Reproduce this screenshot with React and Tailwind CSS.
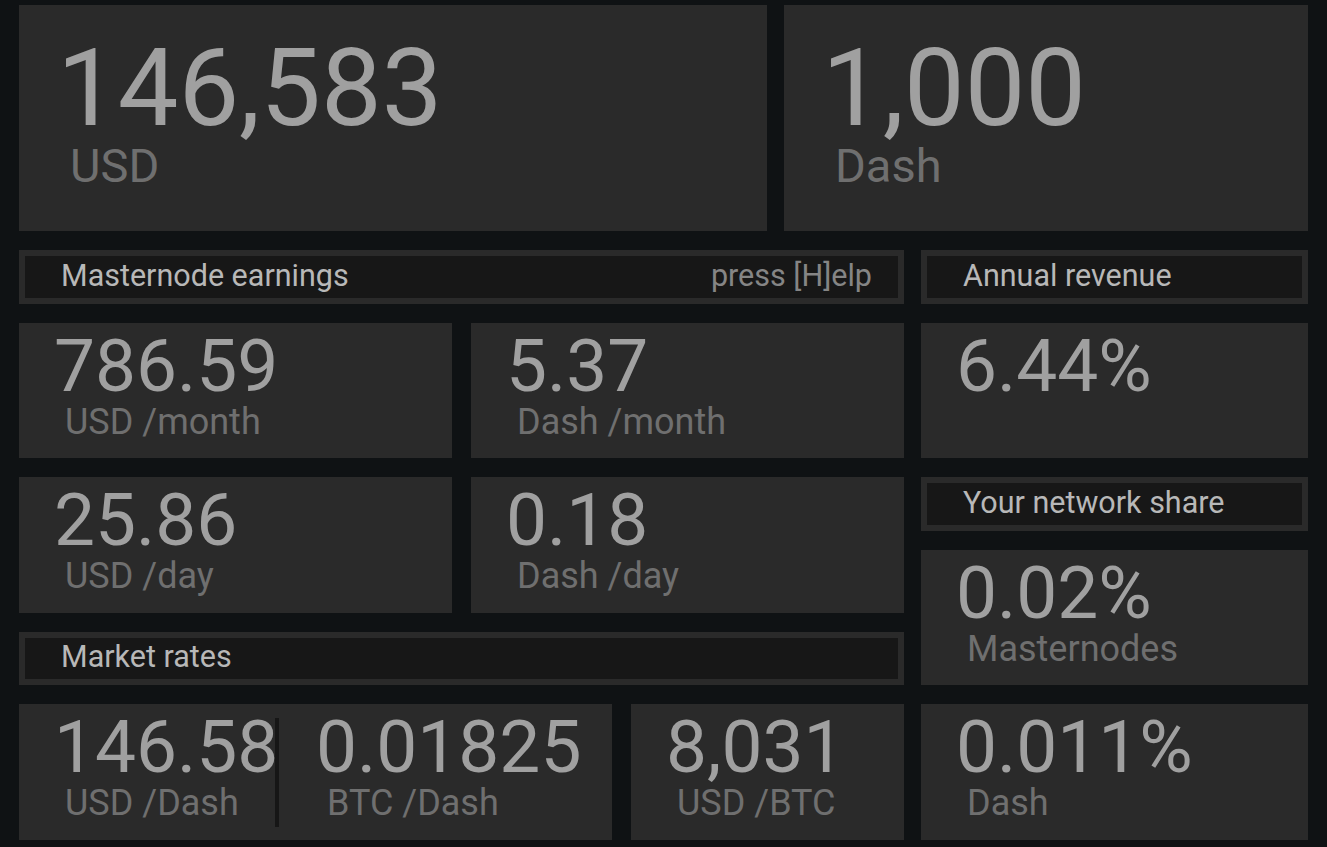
import React from 'react'

/* ── header bar with inset dark panel ─────────────────────────────────── */
function Header({ title, hint, h = 'h-[54px]' }) {
  return (
    <div className={`${h} bg-[#2a2a2a] p-[6px]`}>
      <div className="h-full bg-[#171717] flex items-center justify-between pl-[36px] pr-[26px] pb-[2px]">
        <span className="text-[30.5px] leading-none text-[#b8b8b8]">{title}</span>
        {hint && <span className="text-[30.5px] leading-none text-[#858585]">{hint}</span>}
      </div>
    </div>
  )
}

/* ── stat cell: big number + unit label ───────────────────────────────── */
function Stat({ value, unit }) {
  return (
    <div className="pt-[7px]">
      <div className="text-[73px] leading-none text-[#a0a0a0] pl-[35px] whitespace-nowrap">{value}</div>
      {unit && <div className="mt-[1px] text-[36px] leading-none text-[#6f6f6f] pl-[46px] whitespace-nowrap">{unit}</div>}
    </div>
  )
}

function Cell({ className = '', children }) {
  return <div className={`bg-[#2a2a2a] ${className}`}>{children}</div>
}

function BigCell({ value, unit, w }) {
  return (
    <Cell className={`${w} h-full pt-[29px]`}>
      <div className="text-[108px] leading-none text-[#a0a0a0] pl-[38px]">{value}</div>
      <div className="text-[47px] leading-none text-[#6f6f6f] pl-[51px]">{unit}</div>
    </Cell>
  )
}

export default function App() {
  return (
    <div className="w-[1327px] h-[847px] bg-[#0f1214] pt-[5px] pl-[19px] flex flex-col gap-[19px] overflow-hidden [font-family:Roboto,'Liberation_Sans',sans-serif]">

      {/* Totals */}
      <div className="flex gap-[17px] h-[226px]">
        <BigCell w="w-[748px]" value="146,583" unit="USD" />
        <BigCell w="w-[524px]" value="1,000" unit="Dash" />
      </div>

      <div className="flex gap-[17px]">
        {/* ── left column ─────────────────────────────────────────── */}
        <div className="w-[885px] flex flex-col gap-[19px]">
          <Header title="Masternode earnings" hint="press [H]elp" />

          <div className="flex gap-[19px] h-[135px]">
            <Cell className="w-[433px]"><Stat value="786.59" unit="USD /month" /></Cell>
            <Cell className="w-[433px]"><Stat value="5.37" unit="Dash /month" /></Cell>
          </div>

          <div className="flex gap-[19px] h-[136px]">
            <Cell className="w-[433px]"><Stat value="25.86" unit="USD /day" /></Cell>
            <Cell className="w-[433px]"><Stat value="0.18" unit="Dash /day" /></Cell>
          </div>

          <Header title="Market rates" h="h-[53px]" />

          <div className="flex gap-[19px] h-[136px]">
            <Cell className="w-[593px] flex">
              <div className="w-[256px]"><Stat value="146.58" unit="USD /Dash" /></div>
              <div className="w-[4px] h-[109px] self-center bg-[#161616]" />
              <div className="flex-1 pl-[2px]"><Stat value="0.01825" unit="BTC /Dash" /></div>
            </Cell>
            <Cell className="w-[273px]"><Stat value="8,031" unit="USD /BTC" /></Cell>
          </div>
        </div>

        {/* ── right column ────────────────────────────────────────── */}
        <div className="w-[387px] flex flex-col gap-[19px]">
          <Header title="Annual revenue" />
          <Cell className="h-[135px]"><Stat value="6.44%" /></Cell>
          <Header title="Your network share" />
          <Cell className="h-[135px]"><Stat value="0.02%" unit="Masternodes" /></Cell>
          <Cell className="h-[136px]"><Stat value="0.011%" unit="Dash" /></Cell>
        </div>
      </div>
    </div>
  )
}
